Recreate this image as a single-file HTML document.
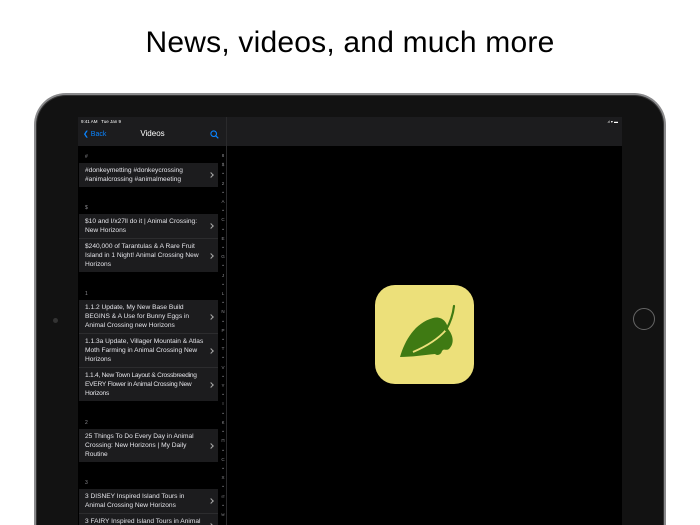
<!DOCTYPE html>
<html><head><meta charset="utf-8"><style>
*{margin:0;padding:0;box-sizing:border-box}
html,body{width:700px;height:525px;overflow:hidden}
body{background:#fff;position:relative;font-family:"Liberation Sans",sans-serif}
h1{position:absolute;top:26px;left:0;width:700px;text-align:center;font-size:30px;font-weight:400;color:#000;letter-spacing:0.2px}
.dev{position:absolute;left:34px;top:93px;width:632px;height:440px;border-radius:32px 32px 0 0;background:#121212;border:2px solid #8a8a8c;border-bottom:none;box-shadow:inset 0 0 0 1px #333}
.scr{position:absolute;left:78px;top:117px;width:544px;height:408px;background:#000;overflow:hidden}
.nav{position:absolute;left:0;top:0;width:544px;height:29px;background:#1c1c1e}
.side{position:absolute;left:0;top:0;width:149px;height:408px;border-right:1px solid #2a2a2c}
.st{position:absolute;top:2px;font-size:4.5px;color:#fff}
.hdr{position:absolute;left:7px;font-size:5px;color:#8e8e93}
.cell{position:absolute;left:1px;width:139px;background:#1c1c1e}
.row{position:relative;padding:3px 13px 3px 6px;font-size:6.6px;line-height:9px;color:#e5e5ea;border-bottom:1px solid #2c2c2e}
.row:last-child{border-bottom:none}
.row:after{content:"";position:absolute;right:5px;top:50%;width:3px;height:3px;border-top:1px solid #aaa;border-right:1px solid #aaa;transform:translateY(-50%) rotate(45deg)}
.idx{position:absolute;left:141px;top:34px;width:8px;font-size:4.5px;color:#8e8e93;text-align:center;line-height:9.2px}
.icon{position:absolute;left:375px;top:285px;width:99px;height:99px;background:#ece07a;border-radius:20px}
.home{position:absolute;left:633px;top:308px;width:22px;height:22px;border-radius:50%;border:1.5px solid #666}
.cam{position:absolute;left:53px;top:318px;width:5px;height:5px;border-radius:50%;background:#333}
</style></head><body>
<h1>News, videos, and much more</h1>
<div class="dev"></div>
<div class="cam"></div><div class="home"></div>
<div class="scr">
<div class="nav"></div>
<div class="side">
<div class="st" style="left:3px">9:41 AM&nbsp;&nbsp; Tue Jan 9</div>
<div style="position:absolute;left:5px;top:13px;font-size:7px;color:#0a84ff">&#10094; Back</div>
<div style="position:absolute;left:0;width:149px;top:12px;text-align:center;font-size:8px;color:#fff">Videos</div>
<svg style="position:absolute;left:132px;top:13px" width="9" height="9" viewBox="0 0 9 9"><circle cx="3.7" cy="3.7" r="2.8" fill="none" stroke="#0a84ff" stroke-width="1.1"/><line x1="5.8" y1="5.8" x2="8.3" y2="8.3" stroke="#0a84ff" stroke-width="1.2"/></svg>
<div class="hdr" style="top:37px">#</div>
<div class="cell" style="top:46px"><div class="row">#donkeymetting #donkeycrossing #animalcrossing #animalmeeting</div></div>
<div class="hdr" style="top:88px">$</div>
<div class="cell" style="top:97px"><div class="row">$10 and I/x27ll do it | Animal Crossing: New Horizons</div><div class="row">$240,000 of Tarantulas &amp; A Rare Fruit Island in 1 Night! Animal Crossing New Horizons</div></div>
<div class="hdr" style="top:174px">1</div>
<div class="cell" style="top:183px"><div class="row">1.1.2 Update, My New Base Build BEGINS &amp; A Use for Bunny Eggs in Animal Crossing new Horizons</div><div class="row">1.1.3a Update, Villager Mountain &amp; Atlas Moth Farming in Animal Crossing New Horizons</div><div class="row" style="letter-spacing:-0.25px;padding-right:9px">1.1.4, New Town Layout &amp; Crossbreeding EVERY Flower in Animal Crossing New Horizons</div></div>
<div class="hdr" style="top:303px">2</div>
<div class="cell" style="top:312px"><div class="row">25 Things To Do Every Day in Animal Crossing: New Horizons | My Daily Routine</div></div>
<div class="hdr" style="top:363px">3</div>
<div class="cell" style="top:372px"><div class="row">3 DISNEY Inspired Island Tours in Animal Crossing New Horizons</div><div class="row">3 FAIRY Inspired Island Tours in Animal Crossing</div></div>
<div class="idx">8<br>$<br>•<br>2<br>•<br>A<br>•<br>C<br>•<br>E<br>•<br>G<br>•<br>J<br>•<br>L<br>•<br>N<br>•<br>P<br>•<br>T<br>•<br>V<br>•<br>Y<br>•<br>Ӏ<br>•<br>К<br>•<br>П<br>•<br>С<br>•<br>Х<br>•<br>ㄹ<br>•<br>ㅂ</div>
</div>
<div style="position:absolute;right:4px;top:2px;font-size:4px;color:#fff">.ıl ▾ ▬</div>
</div>
<div class="icon"><svg width="99" height="99" viewBox="0 0 99 99"><path d="M25 72 C30 55 40 38 58 33 C66 31 72 36 73 44 C78 50 80 58 74 64 C71 66 69 63 67 66 C66 70 62 71 60 69 C50 70 36 72 25 72Z" fill="#3f7a13"/><path d="M38 67 C52 61 64 53 71 45" stroke="#ece07a" stroke-width="1.8" fill="none"/><path d="M71 45 C75 38 78 30 79 21" stroke="#3f7a13" stroke-width="2.2" fill="none" stroke-linecap="round"/></svg></div>
</body></html>
